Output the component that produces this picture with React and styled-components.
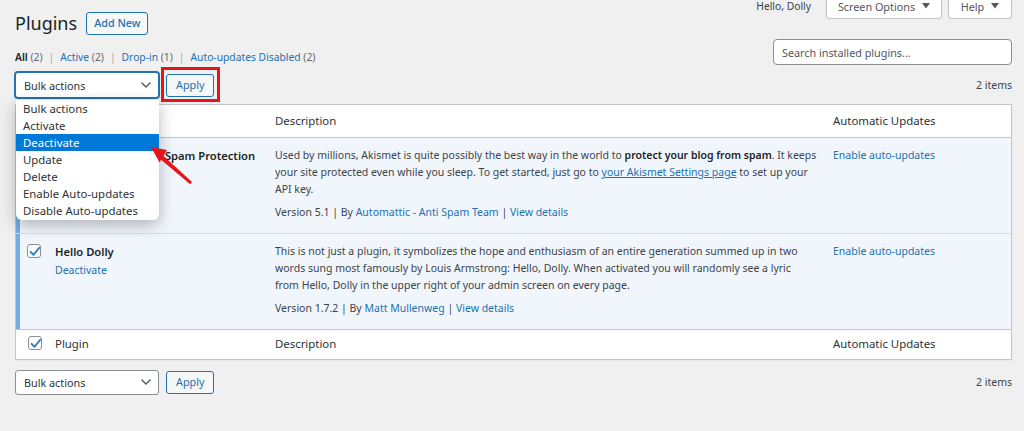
import React from 'react';
import styled, { createGlobalStyle } from 'styled-components';

const GlobalStyle = createGlobalStyle`
  * { box-sizing: border-box; }
  body {
    margin: 0;
    background: #f0f0f1;
    color: #3c434a;
    font-family: 'Noto Sans', 'Open Sans', sans-serif;
    font-size: 10.5px;
    line-height: 17px;
    overflow: hidden;
  }
`;

const Wrap = styled.div`
  padding: 0 12px 0 15px;
  width: 1024px;
  height: 431px;
`;

const Header = styled.div`
  display: flex;
  justify-content: space-between;
  align-items: flex-start;
`;

const TitleRow = styled.div`
  display: flex;
  align-items: center;
  gap: 9px;
  padding-top: 12px;
`;

const Title = styled.h1`
  margin: 0;
  font-size: 18px;
  font-weight: 400;
  color: #1d2327;
  line-height: 23px;
`;

const OutlineButton = styled.button`
  font: inherit;
  font-size: ${p => p.$size || '10.8px'};
  height: ${p => p.$h || 23}px;
  padding: 0 ${p => p.$px || 8}px;
  border: 1px solid #2271b1;
  border-radius: 3px;
  background: #f6f7f7;
  color: #2271b1;
  font-weight: ${p => p.$weight || 400};
  line-height: 1;
  cursor: pointer;
`;

const UserLinks = styled.div`
  display: flex;
  align-items: flex-start;
  margin-top: -5px;
`;

const Hello = styled.span`
  color: #3c434a;
  margin-right: 9px;
  padding-top: 3px;
  font-size: 10.3px;
`;

const MetaTab = styled.button`
  font: inherit;
  font-size: 10.8px;
  height: 24px;
  width: ${p => p.$w}px;
  margin-left: 6px;
  border: 1px solid #c3c4c7;
  border-top: none;
  border-radius: 0 0 4px 4px;
  background: #fff;
  color: #50575e;
  display: flex;
  align-items: center;
  justify-content: center;
  gap: 7px;
  padding: 0 0 1px;
`;

const FilterRow = styled.div`
  display: flex;
  justify-content: space-between;
  align-items: flex-end;
  margin-top: 4px;
`;

const Views = styled.ul`
  list-style: none;
  margin: 0 0 -1px;
  padding: 0;
  display: flex;
  color: #646970;
  font-size: 10.3px;
`;

const View = styled.li`
  a {
    color: ${p => (p.$current ? '#1d2327' : '#2271b1')};
    font-weight: ${p => (p.$current ? 600 : 400)};
    text-decoration: none;
  }
`;

const Sep = styled.span`
  color: #a7aaad;
  margin: 0 6px;
`;

const Search = styled.input`
  width: 239px;
  height: 26px;
  border: 1px solid #8c8f94;
  border-radius: 4px;
  padding: 0 8px;
  font: inherit;
  font-size: 10.8px;
  color: #2c3338;
  background: #fff;
  &::placeholder { color: #50575e; }
`;

const TableNav = styled.div`
  display: flex;
  align-items: center;
  justify-content: space-between;
  margin: ${p => p.$m};
  height: 26px;
`;

const Actions = styled.div`
  display: flex;
  align-items: center;
  gap: 7px;
`;

const SelectWrap = styled.div`
  position: relative;
`;

const Select = styled.div`
  width: 144px;
  height: ${p => p.$h || 26}px;
  border: 1px solid ${p => (p.$focus ? '#2271b1' : '#8c8f94')};
  box-shadow: ${p => (p.$focus ? '0 0 0 1px #2271b1' : 'none')};
  border-radius: 3px;
  background: #fff;
  color: #2c3338;
  font-size: 10.8px;
  display: flex;
  align-items: center;
  justify-content: space-between;
  padding: 0 6px 0 8px;
`;

const Options = styled.ul`
  position: absolute;
  top: 28px;
  left: 1px;
  width: 143px;
  margin: 0;
  padding: 0 0 1px;
  list-style: none;
  background: #fff;
  border-radius: 0 0 6px 6px;
  box-shadow: 0 5px 16px rgba(0, 0, 0, 0.28);
  z-index: 5;
`;

const Option = styled.li`
  height: 17px;
  line-height: 17px;
  padding-left: 7px;
  font-size: 11.4px;
  color: ${p => (p.$active ? '#fff' : '#2c3338')};
  background: ${p => (p.$active ? '#0078d7' : 'transparent')};
`;

const ApplyWrap = styled.div`
  position: relative;
`;

const RedBox = styled.span`
  position: absolute;
  top: -7px;
  left: -5px;
  right: -6px;
  bottom: -5px;
  border: 3px solid #e4161b;
  pointer-events: none;
`;

const Count = styled.span`
  color: #3c434a;
  font-size: 10.5px;
`;

const Table = styled.div`
  background: #fff;
  border: 1px solid #c3c4c7;
  box-shadow: 0 1px 1px rgba(0, 0, 0, 0.04);
`;

const Row = styled.div`
  display: grid;
  grid-template-columns: 29px 220px 558px 1fr;
  background: ${p => (p.$active ? '#f0f6fc' : '#fff')};
  box-shadow: ${p => (p.$active ? 'inset 4px 0 0 #72aee6' : 'none')};
  border-top: ${p => p.$top || 'none'};
  border-bottom: ${p => p.$bottom || 'none'};
`;

const Cell = styled.div`
  padding: ${p => p.$pad || '9px 10px 12px'};
  color: ${p => (p.$head ? '#2c3338' : '#3c434a')};
  font-size: ${p => (p.$head ? '11.4px' : 'inherit')};
`;

const CheckCell = styled.div`
  padding: ${p => p.$pad || '10px 0 0 11px'};
`;

const Box = styled.span`
  display: block;
  width: 14px;
  height: 14px;
  border: 1px solid #8c8f94;
  border-radius: 3px;
  background: #fff;
  position: relative;
  svg {
    position: absolute;
    left: 0;
    top: 0;
  }
`;

const Name = styled.strong`
  display: block;
  white-space: nowrap;
  color: #1d2327;
  font-weight: 600;
  font-size: 11.2px;
`;

const RowActions = styled.div`
  margin-top: 2px;
  white-space: nowrap;
  a { color: #2271b1; text-decoration: none; }
`;

const Desc = styled.p`
  margin: 0;
  white-space: nowrap;
  strong { font-weight: 600; color: #1d2327; }
  a { color: #2271b1; text-decoration: underline; }
`;

const Meta = styled.div`
  margin-top: 6px;
  color: #3c434a;
  a { color: #2271b1; text-decoration: none; }
`;

const Link = styled.a`
  color: #2271b1;
  text-decoration: none;
`;

const ArrowSvg = styled.svg`
  position: absolute;
  left: -15px;
  top: 0;
  pointer-events: none;
  z-index: 6;
`;

const Page = styled.div`
  position: relative;
`;

const Check = () => (
  <Box>
    <svg width="14" height="14" viewBox="0 0 14 14">
      <path d="M2.6 6.9 L5.4 9.8 L11.2 2.8" fill="none" stroke="#3582c4" strokeWidth="2" strokeLinecap="round" strokeLinejoin="round" />
    </svg>
  </Box>
);

const Chevron = () => (
  <svg width="12" height="8" viewBox="0 0 12 8">
    <path d="M1.5 1.5 L6 6 L10.5 1.5" fill="none" stroke="#50575e" strokeWidth="1.4" />
  </svg>
);

const Tri = () => (
  <svg width="8" height="6" viewBox="0 0 8 6">
    <path d="M0 0 H8 L4 5.5 Z" fill="#50575e" />
  </svg>
);

const options = ['Bulk actions', 'Activate', 'Deactivate', 'Update', 'Delete', 'Enable Auto-updates', 'Disable Auto-updates'];

const Nav = ({ top }) => (
  <TableNav $m={top ? '7px 0 6px' : '9px 0 0'}>
    <Actions>
      <SelectWrap>
        <Select $focus={top} $h={top ? 26 : 25}>
          <span>Bulk actions</span>
          <Chevron />
        </Select>
        {top && (
          <Options>
            {options.map(o => (
              <Option key={o} $active={o === 'Deactivate'}>{o}</Option>
            ))}
          </Options>
        )}
      </SelectWrap>
      <ApplyWrap>
        <OutlineButton $px={9}>Apply</OutlineButton>
        {top && <RedBox />}
      </ApplyWrap>
    </Actions>
    <Count>2 items</Count>
  </TableNav>
);

const HeadRow = ({ top }) => (
  <Row $top={top ? 'none' : '1px solid #c3c4c7'} $bottom={top ? '1px solid #c3c4c7' : 'none'}>
    <CheckCell $pad={top ? '9px 0 0 11px' : '6px 0 0 12px'}><Check /></CheckCell>
    <Cell $head $pad={top ? '7px 10px 8px' : '5px 10px 7px'}>Plugin</Cell>
    <Cell $head $pad={top ? '7px 10px 8px' : '5px 10px 7px'}>Description</Cell>
    <Cell $head $pad={top ? '7px 10px 8px' : '5px 10px 7px'}>Automatic Updates</Cell>
  </Row>
);

export default function App() {
  return (
    <>
      <GlobalStyle />
      <Wrap>
        <Page>
          <Header>
            <TitleRow>
              <Title>Plugins</Title>
              <OutlineButton $weight={500} $px={7}>Add New</OutlineButton>
            </TitleRow>
            <UserLinks>
              <Hello>Hello, Dolly</Hello>
              <MetaTab $w={116}>Screen Options <Tri /></MetaTab>
              <MetaTab $w={64}>Help <Tri /></MetaTab>
            </UserLinks>
          </Header>

          <FilterRow>
            <Views>
              <View $current><a>All</a>&nbsp;(2)</View>
              <Sep>|</Sep>
              <View><a>Active</a>&nbsp;(2)</View>
              <Sep>|</Sep>
              <View><a>Drop-in</a>&nbsp;(1)</View>
              <Sep>|</Sep>
              <View><a>Auto-updates Disabled</a>&nbsp;(2)</View>
            </Views>
            <Search placeholder="Search installed plugins..." />
          </FilterRow>

          <Nav top />

          <Table>
            <HeadRow top />
            <Row $active $bottom="1px solid #dcdcde">
              <CheckCell><Check /></CheckCell>
              <Cell>
                <Name>Akismet Anti-Spam: Spam Protection</Name>
                <RowActions><Link>Deactivate</Link> | <Link>Settings</Link></RowActions>
              </Cell>
              <Cell $pad="9px 0 12px 10px">
                <Desc>
                  Used by millions, Akismet is quite possibly the best way in the world to <strong>protect your blog from spam</strong>. It keeps<br />
                  your site protected even while you sleep. To get started, just go to <a>your Akismet Settings page</a> to set up your<br />
                  API key.
                </Desc>
                <Meta>Version 5.1 | By <a>Automattic - Anti Spam Team</a> | <a>View details</a></Meta>
              </Cell>
              <Cell><Link>Enable auto-updates</Link></Cell>
            </Row>
            <Row $active>
              <CheckCell><Check /></CheckCell>
              <Cell>
                <Name>Hello Dolly</Name>
                <RowActions><Link>Deactivate</Link></RowActions>
              </Cell>
              <Cell $pad="9px 0 12px 10px">
                <Desc>
                  This is not just a plugin, it symbolizes the hope and enthusiasm of an entire generation summed up in two<br />
                  words sung most famously by Louis Armstrong: Hello, Dolly. When activated you will randomly see a lyric<br />
                  from Hello, Dolly in the upper right of your admin screen on every page.
                </Desc>
                <Meta>Version 1.7.2 | By <a>Matt Mullenweg</a> | <a>View details</a></Meta>
              </Cell>
              <Cell><Link>Enable auto-updates</Link></Cell>
            </Row>
            <HeadRow />
          </Table>

          <Nav />

          <ArrowSvg width="220" height="200" viewBox="0 0 220 200">
            <polygon points="190.2,184.2 192,182 162,154.6 159,158" fill="#e4161b" />
            <polygon points="151,147 167,150 159.5,162.5" fill="#e4161b" />
          </ArrowSvg>
        </Page>
      </Wrap>
    </>
  );
}
